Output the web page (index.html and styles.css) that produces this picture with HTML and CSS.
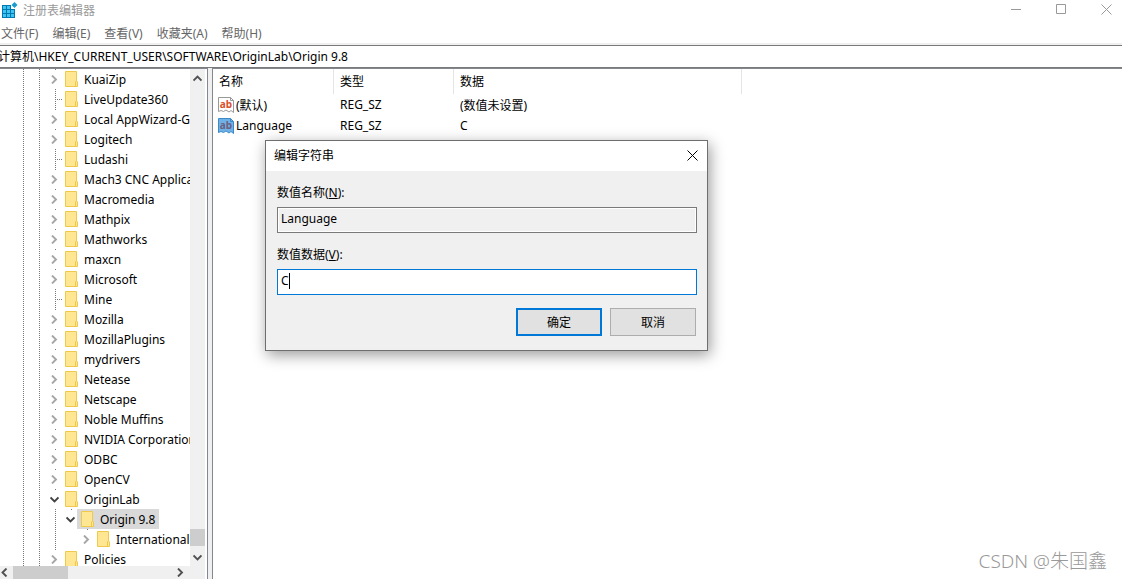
FILE: index.html
```html
<!DOCTYPE html>
<html lang="zh-CN">
<head>
  <meta charset="UTF-8">
  <meta name="viewport" content="width=device-width, initial-scale=1.0">
  <title>注册表编辑器</title>
  <link rel="stylesheet" href="styles.css">
</head>
<body>

  <!-- shared icons -->
  <svg class="sprite" aria-hidden="true">
    <symbol id="folder" viewBox="0 0 13 16">
      <path d="M.5 .5h11v9.500l1 1v4.500H.5z" fill="#ffe693" stroke="#efc94c"/>
      <path d="M10.500 15V11l1-1.500" fill="none" stroke="#efc94c"/>
    </symbol>
    <symbol id="right" viewBox="0 0 9 9">
      <path d="M2 .5l4 4-4 4" fill="none" stroke="currentColor" stroke-width="1.900"/>
    </symbol>
    <symbol id="down" viewBox="0 0 9 9">
      <path d="M.5 2.500l4 4 4-4" fill="none" stroke="currentColor" stroke-width="1.900"/>
    </symbol>
    <symbol id="up" viewBox="0 0 9 9">
      <path d="M.5 6.500l4-4 4 4" fill="none" stroke="currentColor" stroke-width="1.900"/>
    </symbol>
    <symbol id="left" viewBox="0 0 9 9">
      <path d="M6.500 .5l-4 4 4 4" fill="none" stroke="currentColor" stroke-width="1.900"/>
    </symbol>
    <symbol id="close" viewBox="0 0 11 11">
      <path d="M.5 .5l10 10M10.500 .5l-10 10" fill="none" stroke="currentColor"/>
    </symbol>
    <symbol id="page" viewBox="0 0 16 16">
      <path d="M.5 .5h12l3 3v12l-2.500-2-2 1.500-3-2-2.500 1.500-2.500-1-2.500 1z" fill="var(--page)" stroke="var(--edge)"/>
      <path d="M12.500 .5v3h3" fill="none" stroke="var(--edge)"/>
    </symbol>
  </svg>

  <div class="window">
    <header class="titlebar">
      <svg class="app-icon" viewBox="0 0 16 16" aria-hidden="true">
        <path d="M0 3h9v4h4v9H0z" fill="#0078b0"/>
        <path d="M1 4h3v3H1zM5 4h3v3H5zM1 8h3v3H1zM5 8h3v3H5zM9 8h3v3H9zM1 12h3v3H1zM5 12h3v3H5zM9 12h3v3H9z" fill="#3fc3f0"/>
        <path d="M12.500 0l3 3-3 3-3-3z" fill="#1b9bd0"/>
      </svg>
      <h1>注册表编辑器</h1>
      <div class="window-buttons">
        <button aria-label="最小化"><svg width="11" height="11"><path d="M0 5.500h10" stroke="currentColor"/></svg></button>
        <button aria-label="最大化"><svg width="11" height="11"><path d="M.5 .5h9v9h-9z" fill="none" stroke="currentColor"/></svg></button>
        <button aria-label="关闭"><svg width="11" height="11"><use href="#close"/></svg></button>
      </div>
    </header>

    <nav class="menu">
      <button>文件(F)</button>
      <button>编辑(E)</button>
      <button>查看(V)</button>
      <button>收藏夹(A)</button>
      <button>帮助(H)</button>
    </nav>

    <input class="address" aria-label="地址" value="计算机\HKEY_CURRENT_USER\SOFTWARE\OriginLab\Origin 9.8">

    <main class="panes">
      <div class="tree-pane">
        <ul class="tree" id="tree"></ul>
        <div class="scroll-y">
          <button aria-label="向上"><svg class="arrow"><use href="#up"/></svg></button>
          <div class="thumb"></div>
          <button aria-label="向下"><svg class="arrow"><use href="#down"/></svg></button>
        </div>
        <div class="scroll-x">
          <button aria-label="向左"><svg class="arrow"><use href="#left"/></svg></button>
          <div class="thumb"></div>
          <button aria-label="向右"><svg class="arrow"><use href="#right"/></svg></button>
        </div>
      </div>

      <section class="list-pane">
        <table class="values">
          <thead>
            <tr><th class="col-name">名称</th><th class="col-type">类型</th><th class="col-data">数据</th></tr>
          </thead>
          <tbody>
            <tr>
              <td><span class="value-name"><span class="ab"><svg><use href="#page"/></svg><b>ab</b></span>(默认)</span></td>
              <td>REG_SZ</td>
              <td>(数值未设置)</td>
            </tr>
            <tr>
              <td><span class="value-name"><span class="ab selected"><svg><use href="#page"/></svg><b>ab</b></span>Language</span></td>
              <td>REG_SZ</td>
              <td>C</td>
            </tr>
          </tbody>
        </table>
      </section>
    </main>

    <form class="dialog" role="dialog" aria-labelledby="dialog-title">
      <div class="dialog-title">
        <h2 id="dialog-title">编辑字符串</h2>
        <button type="button" aria-label="关闭"><svg width="11" height="11"><use href="#close"/></svg></button>
      </div>
      <div class="dialog-body">
        <label for="value-name">数值名称(<u>N</u>):</label>
        <input id="value-name" value="Language" readonly>
        <label for="value-data">数值数据(<u>V</u>):</label>
        <input id="value-data" value="C">
        <div class="dialog-buttons">
          <button type="button" class="default">确定</button>
          <button type="button">取消</button>
        </div>
      </div>
    </form>

    <div class="watermark">CSDN @朱国鑫</div>
  </div>

  <script>
    // name, depth, state: "+" collapsed, "-" expanded, "" no children
    const keys = [
      ["KuaiZip", 0, "+"],
      ["LiveUpdate360", 0, ""],
      ["Local AppWizard-Generated Applications", 0, "+"],
      ["Logitech", 0, "+"],
      ["Ludashi", 0, ""],
      ["Mach3 CNC Application", 0, "+"],
      ["Macromedia", 0, "+"],
      ["Mathpix", 0, "+"],
      ["Mathworks", 0, "+"],
      ["maxcn", 0, "+"],
      ["Microsoft", 0, "+"],
      ["Mine", 0, ""],
      ["Mozilla", 0, "+"],
      ["MozillaPlugins", 0, "+"],
      ["mydrivers", 0, "+"],
      ["Netease", 0, "+"],
      ["Netscape", 0, "+"],
      ["Noble Muffins", 0, "+"],
      ["NVIDIA Corporation", 0, "+"],
      ["ODBC", 0, "+"],
      ["OpenCV", 0, "+"],
      ["OriginLab", 0, "-"],
      ["Origin 9.8", 1, "-"],
      ["International", 2, "+"],
      ["Policies", 0, "+"]
    ];

    document.getElementById("tree").innerHTML = keys.map(([name, depth, state]) => {
      let cells = '<span class="guide"></span><span class="guide"></span>';
      if (depth > 0) cells += '<span class="guide"></span>';
      if (depth > 1) cells += '<span class="guide blank"></span>';
      const last = depth > 0 ? " last" : "";
      if (state) {
        const icon = state === "+" ? "right" : "down";
        cells += `<span class="guide${last}"><button class="${icon}" aria-label="${name}"><svg class="arrow"><use href="#${icon}"/></svg></button></span>`;
      } else {
        cells += '<span class="guide leaf"></span>';
      }
      const selected = depth === 1 ? " selected" : "";
      return `<li>${cells}<span class="key${selected}"><svg><use href="#folder"/></svg>${name}</span></li>`;
    }).join("");
  </script>

</body>
</html>
```
FILE: styles.css
```css
* {
  box-sizing: border-box;
}
body {
  margin: 0;
  font-family: "Noto Sans", "Noto Sans CJK SC", sans-serif;
  font-size: 12px;
  color: #000;
  background: #fff;
}
button, input {
  font: inherit;
  color: inherit;
}
button {
  padding: 0;
  border: none;
  background: none;
}
h1, h2 {
  margin: 0;
  font-size: 12px;
  font-weight: normal;
}
svg {
  display: block;
}
.sprite {
  display: none;
}
.window {
  position: relative;
  display: flex;
  flex-direction: column;
  height: 100vh;
  overflow: hidden;
}

/* title bar and menu */
.titlebar {
  display: flex;
  align-items: center;
  gap: 5px;
  height: 19px;
  padding-left: 2px;
  color: #999;
}
.app-icon {
  width: 16px;
  height: 16px;
}
.window-buttons {
  display: flex;
  gap: 34px;
  margin-left: auto;
  padding-right: 10px;
}
.menu {
  display: flex;
  gap: 14px;
  height: 26px;
  padding: 5px 0 1px 1px;
  color: #666;
  border-bottom: 2px solid #f0f0f0;
}
.address {
  width: 100%;
  height: 23px;
  padding: 0 0 1px;
  border: solid #7a7a7a;
  border-width: 1px 0;
  outline: none;
  text-indent: -2px;
}

/* panes */
.panes {
  display: flex;
  flex: 1;
  gap: 4px;
  min-height: 0;
  background: #f0f0f0;
}
.tree-pane {
  display: grid;
  grid-template: minmax(0, 1fr) 13px / minmax(0, 1fr) 15px;
  width: 208px;
  padding-right: 2px;
  background: #fff;
  border-top: 1px solid #828790;
  border-right: 1px solid #828790;
}
.tree {
  margin: 0;
  padding: 0;
  list-style: none;
  overflow: hidden;
}
.tree li {
  display: flex;
  height: 20px;
  padding-left: 15px;
}
.guide {
  display: flex;
  flex: none;
  align-items: center;
  justify-content: center;
  width: 16px;
  background: repeating-linear-gradient(#777 0 1px, transparent 1px 2px) 8px 0 / 1px 100% no-repeat;
}
.guide.leaf {
  background:
    repeating-linear-gradient(#777 0 1px, transparent 1px 2px) 8px 0 / 1px 100% no-repeat,
    repeating-linear-gradient(90deg, #777 0 1px, transparent 1px 2px) 8px 10px / 8px 1px no-repeat;
}
.guide.last {
  background-size: 1px 50%;
}
.guide.blank {
  background: none;
}
.guide button {
  padding: 4px 4px 4px 2px;
  color: #a6a6a6;
  background: #fff;
}
.guide .down {
  color: #404040;
}
.arrow {
  width: 9px;
  height: 9px;
}
.key {
  display: flex;
  flex: none;
  align-items: center;
  gap: 6px;
  margin-left: -2px;
  padding: 0 4px;
  white-space: nowrap;
}
.key svg {
  width: 13px;
  height: 16px;
}
.key.selected {
  background: #d9d9d9;
}

/* scroll bars */
.scroll-y, .scroll-x {
  display: flex;
  align-items: center;
  color: #505050;
  background: #f0f0f0;
}
.scroll-y {
  flex-direction: column;
  padding: 5px 0 4px;
}
.scroll-y .thumb {
  width: 15px;
  height: 17px;
  margin: auto 0 7px;
  background: #cdcdcd;
}
.scroll-x {
  grid-column: 1 / 3;
  padding-right: 20px;
}
.scroll-x .thumb {
  width: 55px;
  height: 13px;
  margin: 0 auto 0 4px;
  background: #cdcdcd;
}

/* value list */
.list-pane {
  flex: 1;
  background: #fff;
  border-top: 1px solid #828790;
  border-left: 1px solid #828790;
}
.values {
  border-spacing: 0;
  table-layout: fixed;
  width: 529px;
}
.values th, .values td {
  padding: 0 6px;
  text-align: left;
  font-weight: normal;
}
.values th {
  height: 25px;
  padding-bottom: 1px;
  border-right: 1px solid #e5e5e5;
}
.values td {
  height: 21px;
}
.col-name {
  width: 121px;
}
.col-type {
  width: 120px;
}
.values td:first-child {
  padding-left: 5px;
}
.value-name {
  display: flex;
  align-items: center;
  gap: 2px;
}
.ab {
  --page: #fff;
  --edge: #999;
  display: grid;
  color: #d9502e;
}
.ab.selected {
  --page: #6fb1e6;
  --edge: #3c8bc9;
  color: #6b5f82;
}
.ab svg, .ab b {
  grid-area: 1 / 1;
  width: 16px;
  height: 16px;
}
.ab b {
  font: bold 10px/14px "Noto Sans", sans-serif;
  text-align: center;
}

/* edit dialog */
.dialog {
  position: absolute;
  left: 265px;
  top: 140px;
  width: 443px;
  background: #f0f0f0;
  border: 1px solid #6e6e6e;
  box-shadow: 2px 4px 14px rgba(0, 0, 0, 0.4);
}
.dialog-title {
  display: flex;
  align-items: center;
  justify-content: space-between;
  height: 30px;
  padding: 0 9px 2px 8px;
  background: #fff;
}
.dialog-body {
  display: flex;
  flex-direction: column;
  padding: 12px 10px 14px 11px;
}
.dialog-body label {
  height: 20px;
  line-height: 20px;
  margin-bottom: 4px;
}
.dialog-body input {
  height: 26px;
  margin-bottom: 12px;
  padding: 0 3px 3px;
  border: 1px solid #7a7a7a;
  background: #f0f0f0;
  box-shadow: inset 0 0 0 1px #fff;
  outline: none;
}
/* active field with its text cursor */
.dialog-body #value-data {
  border-color: #0078d7;
  background: #fff linear-gradient(#000, #000) 11px 3px / 1px 16px no-repeat;
}
.dialog-buttons {
  display: flex;
  justify-content: flex-end;
  gap: 8px;
  padding: 1px 1px 0 0;
}
.dialog-buttons button {
  width: 86px;
  height: 28px;
  background: #e1e1e1;
  border: 1px solid #adadad;
}
.dialog-buttons .default {
  border: 2px solid #0078d7;
}

.watermark {
  position: absolute;
  right: 15px;
  bottom: 5px;
  font: 19px/26px "Noto Sans", "Noto Sans CJK SC", sans-serif;
  font-weight: 300;
  color: #999;
}
```
